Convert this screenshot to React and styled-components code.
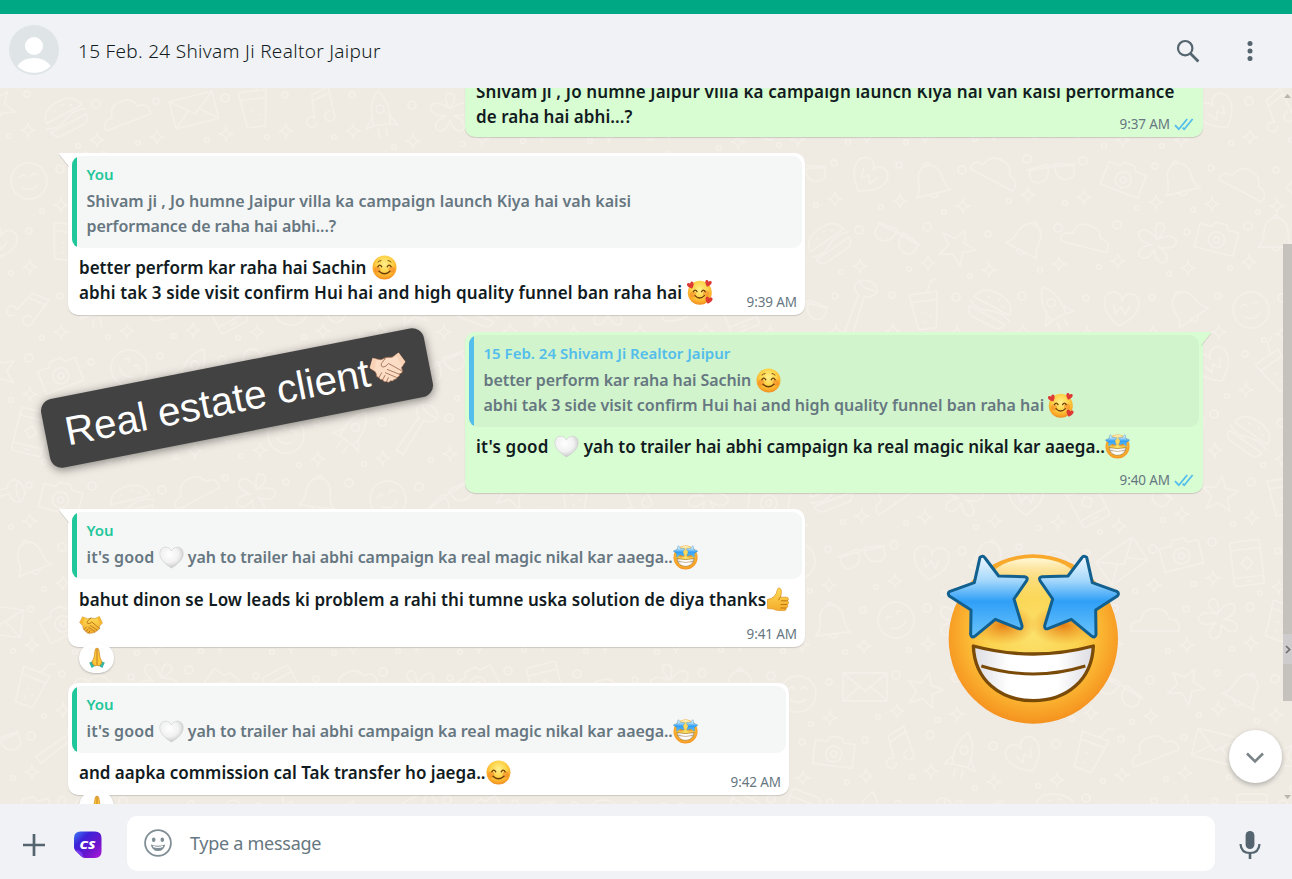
import React from 'react';
import styled, { createGlobalStyle, css } from 'styled-components';

const Global = createGlobalStyle`
  * { box-sizing: border-box; }
  body { margin: 0; font-family: 'Noto Sans', 'Open Sans', sans-serif; color: #111b21; }
`;

const Page = styled.div`
  width: 1292px;
  height: 879px;
  display: flex;
  flex-direction: column;
  overflow: hidden;
`;
const TopStrip = styled.div`
  height: 14px;
  flex: none;
  background: #00a884;
`;
const Header = styled.header`
  height: 74px;
  flex: none;
  display: flex;
  align-items: center;
  padding: 0 37px 2px 9px;
  background: #f0f2f5;
`;
const Title = styled.h1`
  flex: 1;
  margin: 2px 0 0 19px;
  font-size: 19px;
  font-weight: 350;
  line-height: 28px;
  letter-spacing: 0.31px;
  color: #111b21;
`;
const HeaderActions = styled.div`
  display: flex;
  align-items: center;
  gap: 45px;
  margin-top: 2px;
`;

const Chat = styled.main`
  position: relative;
  flex: none;
  height: 716px;
  overflow: hidden;
  background: #efeae2;
`;
const Wallpaper = styled.svg`
  position: absolute;
  inset: 0;
`;
const Messages = styled.div`
  position: relative;
  display: flex;
  flex-direction: column;
  padding: 0 89px 0 68px;
`;
const Bubble = styled.article`
  position: relative;
  flex: none;
  width: ${(p) => p.$w}px;
  margin-top: ${(p) => p.$gap}px;
  padding: 3px 3px 0 4px;
  border-radius: 10px;
  background: ${(p) => (p.$out ? '#d9fdd3' : '#fff')};
  align-self: ${(p) => (p.$out ? 'flex-end' : 'flex-start')};
  box-shadow: 0 1px 1px rgba(11, 20, 26, 0.16);
  ${(p) => p.$out && css`padding-right: 4px;`}
  ${(p) => p.$tail && (p.$out ? css`border-top-right-radius: 0;` : css`border-top-left-radius: 0;`)}
`;
const TailShape = styled.svg`
  position: absolute;
  top: 0;
  filter: drop-shadow(0 1px 0.5px rgba(11, 20, 26, 0.16));
  ${(p) => (p.$out ? 'right: -8px; transform: scaleX(-1);' : 'left: -9px;')}
`;
const Quote = styled.blockquote`
  display: flex;
  margin: 0;
  overflow: hidden;
  border-radius: 9px;
  background: ${(p) => (p.$out ? '#d1f4cc' : '#f5f6f6')};
  color: #667781;
  font-size: 16px;
  &::before {
    content: '';
    width: 5px;
    flex: none;
    background: ${(p) => (p.$out ? '#53bdeb' : '#1fc79a')};
  }
`;
const QuoteText = styled.div`
  padding: 5px 9px 9px 9.5px;
`;
const Author = styled.div`
  height: 28px;
  line-height: 26px;
  font-size: 15px;
  font-weight: 600;
  color: ${(p) => (p.$out ? '#53bdeb' : '#1fc79a')};
`;
const Line = styled.div`
  height: 25px;
  display: flex;
  align-items: center;
  line-height: 25px;
  font-weight: 600;
  white-space: pre;
`;
const Run = styled.span`
  letter-spacing: ${(p) => p.$ls || 0}px;
  margin-right: ${(p) => p.$after || 0}px;
`;
const Body = styled.div`
  display: grid;
  height: ${(p) => p.$h}px;
  padding: ${(p) => p.$top || 7}px 5px 3px 7px;
  font-size: 17px;
`;
const Text = styled.div`
  grid-area: 1 / 1;
`;
const Meta = styled.div`
  grid-area: 1 / 1;
  place-self: end;
  display: flex;
  align-items: center;
  gap: 4px;
  height: 20px;
  font-size: 13.5px;
  letter-spacing: -0.1px;
  color: #667781;
`;
const Reaction = styled.div`
  position: absolute;
  left: 11px;
  bottom: -26px;
  width: 35px;
  height: 30px;
  display: flex;
  align-items: center;
  justify-content: center;
  border-radius: 15px;
  background: #fff;
  box-shadow: 0 1px 2px rgba(11, 20, 26, 0.22);
`;
const EmojiSvg = styled.svg`
  flex: none;
  margin-right: ${(p) => p.$after || 0}px;
`;

const Label = styled.div`
  position: absolute;
  left: 42px;
  top: 275px;
  width: 390px;
  height: 70px;
  display: flex;
  align-items: center;
  padding-left: 20px;
  border-radius: 12px;
  background: #424242;
  color: #fff;
  font: 40.400px/70px 'Liberation Sans', sans-serif;
  white-space: pre;
  transform: rotate(-11.100deg);
  box-shadow: 0 2px 10px rgba(0, 0, 0, 0.45);
`;
const Sticker = styled.div`
  position: absolute;
  left: 945px;
  top: 463px;
  width: 176px;
  height: 176px;
`;
const JumpButton = styled.button`
  position: absolute;
  right: 10px;
  bottom: 21px;
  width: 53px;
  height: 53px;
  display: grid;
  place-items: center;
  padding: 0 2px 0 0;
  border: 0;
  border-radius: 50%;
  background: #fff;
  box-shadow: 0 2px 5px rgba(11, 20, 26, 0.28);
`;
const ScrollRail = styled.div`
  position: absolute;
  top: 0;
  right: 0;
  bottom: 0;
  width: 9px;
  display: flex;
  flex-direction: column;
  justify-content: space-between;
  align-items: center;
  padding: 6px 0 5px;
`;
const Thumb = styled.div`
  position: absolute;
  top: 156px;
  right: 0;
  width: 9px;
  height: 457px;
  background: #c5c2bd;
`;
const PanelTab = styled.div`
  position: absolute;
  top: 546px;
  right: 0;
  width: 9px;
  height: 30px;
  display: grid;
  place-items: center;
  background: #cfccce;
`;

const Footer = styled.footer`
  flex: 1;
  display: flex;
  align-items: center;
  padding: 4px 31px 0 23px;
  background: #f0f2f5;
`;
const ToolIcons = styled.div`
  width: 104px;
  flex: none;
  display: flex;
  align-items: center;
  gap: 28px;
  margin-top: 2px;
`;
const Composer = styled.div`
  width: 1088px;
  height: 55px;
  margin-top: -1px;
  display: flex;
  align-items: center;
  gap: 18px;
  padding-left: 17px;
  border-radius: 10px;
  background: #fff;
`;
const Placeholder = styled.span`
  font-size: 18px;
  letter-spacing: -0.28px;
  color: #667781;
`;
const MicSlot = styled.div`
  margin: 2px 0 0 24px;
  display: flex;
`;

function Defs() {
  return (
    <svg width="0" height="0" display="block">
      <defs>
        <radialGradient id="face" cx="50%" cy="36%" r="66%">
          <stop offset="0" stopColor="#fff08c" />
          <stop offset=".5" stopColor="#fdd348" />
          <stop offset=".8" stopColor="#fbab29" />
          <stop offset="1" stopColor="#ee8722" />
        </radialGradient>
        <radialGradient id="bigFace" cx="50%" cy="46%" r="54%">
          <stop offset="0" stopColor="#fbe26c" />
          <stop offset=".5" stopColor="#fbd350" />
          <stop offset=".72" stopColor="#fbb833" />
          <stop offset="1" stopColor="#f5921f" />
        </radialGradient>
        <linearGradient id="shine" x1="0" y1="0" x2="0" y2="1">
          <stop offset="0" stopColor="#fff9d8" />
          <stop offset="1" stopColor="#fbe380" stopOpacity="0" />
        </linearGradient>
        <linearGradient id="star" x1="0" y1="0" x2="0" y2="1">
          <stop offset="0" stopColor="#f2f9ff" />
          <stop offset=".3" stopColor="#a5d8fb" />
          <stop offset=".56" stopColor="#2f9ff7" />
          <stop offset="1" stopColor="#6cc4fb" />
        </linearGradient>
        <radialGradient id="eyeShade">
          <stop offset="0" stopColor="#e2740c" stopOpacity=".9" />
          <stop offset="1" stopColor="#f0901c" stopOpacity="0" />
        </radialGradient>
        <linearGradient id="teeth" x1="0" x2="1" y1="0" y2="0">
          <stop offset="0" stopColor="#dcdce2" />
          <stop offset=".3" stopColor="#fff" />
          <stop offset=".7" stopColor="#fff" />
          <stop offset="1" stopColor="#dcdce2" />
        </linearGradient>
        <radialGradient id="white" cx="42%" cy="35%" r="65%">
          <stop offset="0" stopColor="#fff" />
          <stop offset=".6" stopColor="#f1f1f1" />
          <stop offset="1" stopColor="#c9c9c9" />
        </radialGradient>
        <linearGradient id="hand" x1="0" y1="0" x2="0" y2="1">
          <stop offset="0" stopColor="#fddb55" />
          <stop offset="1" stopColor="#f5ac2c" />
        </linearGradient>
        <linearGradient id="badge" x1="0" y1="0" x2="1" y2="1">
          <stop offset="0" stopColor="#3f7df5" />
          <stop offset=".3" stopColor="#3b22d8" />
          <stop offset=".65" stopColor="#6a16cc" />
          <stop offset="1" stopColor="#b01ad8" />
        </linearGradient>
      </defs>
    </svg>
  );
}

const STAR = 'M180 82 Q189 74 195 84 L236 138 L314 140 Q325 142 320 152 L282 207 L306 287 Q307 299 296 296 L226 268 L164 319 Q155 325 152 314 L153 240 L89 199 Q80 190 90 184 L163 158Z';

function StarStruck({ size = 25, after }) {
  const big = size > 60;
  return (
    <EmojiSvg $after={after} width={size} height={size} viewBox="75 63 528 528" role="img" aria-label="🤩">
      <circle cx="340" cy="327" r="254" fill="url(#bigFace)" />
      <ellipse cx="340" cy="150" rx="130" ry="66" fill="url(#shine)" />
      <ellipse cx="250" cy="285" rx="100" ry="60" fill="url(#eyeShade)" />
      <ellipse cx="430" cy="285" rx="100" ry="60" fill="url(#eyeShade)" />
      <path d="M160 348 Q340 396 520 348 C516 450 440 512 340 512 C240 512 164 450 160 348Z" fill="url(#teeth)" stroke="#7a4a08" strokeWidth="10" strokeLinejoin="round" />
      <path d="M184 408 Q340 456 496 408" fill="none" stroke="#7a4a08" strokeWidth="9" />
      <g stroke={big ? '#12608f' : '#3f93c4'} strokeWidth="9" strokeLinejoin="round" fill="url(#star)">
        <path d={STAR} />
        <path d={STAR} transform="matrix(-1 0 0 1 680 0)" />
      </g>
    </EmojiSvg>
  );
}

function Blush({ brows }) {
  return (
    <EmojiSvg width="25" height="25" viewBox="0 0 25 25" role="img" aria-label={brows ? '☺' : '😊'}>
      <circle cx="12.5" cy="12.5" r="12" fill="url(#face)" />
      <circle cx="5.3" cy="14.6" r="3.2" fill="#f2711c" opacity=".45" />
      <circle cx="19.7" cy="14.6" r="3.2" fill="#f2711c" opacity=".45" />
      <g fill="none" stroke="#6b3c08" strokeWidth="1.3" strokeLinecap="round">
        <path d="M5.8 11.8 Q7.8 8.6 9.8 11.8 M15.2 11.8 Q17.2 8.6 19.2 11.8" />
        <path d="M7 16.2 Q12.5 21.4 18 16.2" />
        {brows && <path d="M6 7 Q7.3 5.6 9 5.6 M19 7 Q17.7 5.6 16 5.6" strokeWidth=".9" />}
      </g>
    </EmojiSvg>
  );
}

const HEART = 'M0 3 C-5 -1 -3.2 -4 -1.3 -3.3 Q-.3 -3 0 -1.9 Q.3 -3 1.3 -3.3 C3.2 -4 5 -1 0 3Z';

function Hearts() {
  return (
    <EmojiSvg width="26" height="25" viewBox="0 0 26 25" role="img" aria-label="🥰">
      <circle cx="12.8" cy="12.7" r="12" fill="url(#face)" />
      <circle cx="6" cy="14.6" r="3" fill="#f2711c" opacity=".45" />
      <circle cx="19" cy="13.6" r="3" fill="#f2711c" opacity=".45" />
      <g fill="none" stroke="#6b3c08" strokeWidth="1.3" strokeLinecap="round">
        <path d="M6.4 11.6 Q8.2 8.8 10 11.6 M14.6 11.6 Q16.4 8.8 18.2 11.6" />
        <path d="M8 15.6 Q12.6 20.4 17.4 15.6" />
      </g>
      <g fill="#dd3a35">
        <path d={HEART} transform="translate(4 5.6) rotate(-24) scale(1.05)" />
        <path d={HEART} transform="translate(21 3.8) rotate(18) scale(1)" />
        <path d={HEART} transform="translate(21.6 20.6) rotate(14) scale(1.1)" />
      </g>
    </EmojiSvg>
  );
}

function WhiteHeart({ after }) {
  return (
    <EmojiSvg $after={after} width="25" height="25" viewBox="0 0 25 25" role="img" aria-label="🤍">
      <path d="M12.5 23 C6 19 .8 14.4 .8 8.4 C.8 4.6 3.4 2.2 6.6 2.2 C9.4 2.2 11.4 3.6 12.5 6 C13.6 3.6 15.6 2.2 18.4 2.2 C21.6 2.2 24.2 4.6 24.2 8.4 C24.2 14.4 19 19 12.5 23Z" fill="url(#white)" stroke="#c4c6c6" strokeWidth=".5" />
    </EmojiSvg>
  );
}

function ThumbsUp() {
  return (
    <EmojiSvg width="24" height="25" viewBox="0 0 24 25" role="img" aria-label="👍">
      <path d="M1.5 12.4 Q5.6 12 8 9.6 Q10.8 6.6 11.2 3.2 Q11.6 .8 13.4 1 Q15.8 1.6 15.4 5.4 Q15.2 8 14.4 10.2 L20.4 10.2 Q22.6 10.4 22.4 12.2 Q22.3 13.4 21.4 13.8 Q23 14.6 22.5 16.2 Q22.2 17.3 21 17.6 Q22.2 18.6 21.6 19.9 Q21 21 19.8 21.1 Q20.6 22.2 19.8 23 Q19.2 23.6 17.4 23.6 L12.6 23.5 Q9 23 7.2 22 L1.5 21.6Z" fill="url(#hand)" stroke="#dd8f22" strokeWidth=".7" strokeLinejoin="round" />
      <path d="M15.4 13.8 H21.4 M15 17.5 H21 M14.8 21 H19.8 M14.4 10.2 Q12.8 11 12.8 12.8" fill="none" stroke="#b96d10" strokeWidth=".9" strokeLinecap="round" />
    </EmojiSvg>
  );
}

function Handshake({ size = 24, light }) {
  const line = light ? '#a06a50' : '#a86510';
  const skin = light ? '#fbdcc4' : 'url(#hand)';
  return (
    <EmojiSvg width={size} height={size} viewBox="0 0 24 24" role="img" aria-label="🤝">
      <path d="M3.6 3.8 L8.6 5.8 L12 5 L15.8 5.6 L20.4 3.6 L23.4 10 L20.4 13.2 L20.6 15.6 Q20 17 18.4 16.8 Q18.4 18.6 16.6 18.6 Q16 20 14.4 19.6 Q13.4 20.8 12 20 Q10.6 21.4 9.4 20 Q7.6 20.4 7.2 18.4 Q5.4 18.4 5.2 16.6 Q3.4 16 4 14.2 L3.6 12.6 L.7 9.6Z" fill={skin} stroke={line} strokeWidth=".4" strokeLinejoin="round" />
      <path d="M12 5 L8.4 8.2 Q7.4 10 9 10.6 Q11 10.8 12.8 9 L20.4 15.4 M11.4 12.6 L18.2 17 M9.8 14.4 L16 18.6 M5.2 16.6 L7.4 14 M7.2 18.4 L9.2 16 M9.4 20 L11 17.8" fill="none" stroke={line} strokeWidth={light ? 0.5 : 0.75} strokeLinecap="round" strokeLinejoin="round" />
      <path d="M.7 9.6 L3.6 3.8 L6 4.8 L3.2 11.6Z M23.4 10 L20.4 3.6 L18.2 4.6 L21 12.2Z" fill={light ? '#f8d3b8' : '#f7b733'} />
    </EmojiSvg>
  );
}

function Pray() {
  return (
    <EmojiSvg width="20" height="22" viewBox="0 0 20 22" role="img" aria-label="🙏">
      <path d="M2.2 15.4 L6.6 14 L8.4 18.8 L4.6 21Z M17.8 15.4 L13.4 14 L11.6 18.8 L15.4 21Z" fill="#35b5a6" />
      <path d="M9.8 1.2 Q8.2 1 8 4 L7 10.6 L5 15 Q6 19 9 19 L9.9 18Z M10.2 1.2 Q11.8 1 12 4 L13 10.6 L15 15 Q14 19 11 19 L10.1 18Z" fill="#fcc73a" stroke="#cf8416" strokeWidth=".7" strokeLinejoin="round" />
    </EmojiSvg>
  );
}

function Ticks() {
  return (
    <svg width="20" height="13" viewBox="0 0 20 13" fill="none" stroke="#53bdeb" strokeWidth="1.8">
      <path d="M1 7.2 L4.8 11.2 L13.2 1 M8.6 9.6 L10.2 11.2 L18.6 1" />
    </svg>
  );
}

function Tail({ out }) {
  return (
    <TailShape $out={out} width="10" height="14" viewBox="0 0 10 14">
      <path d="M0 1 Q0 0 1.5 0 H10 V13.5Z" fill={out ? '#d9fdd3' : '#fff'} />
    </TailShape>
  );
}

const DOODLES = [
  'M0 -18 L5 -6 L18 -5 L8 3 L12 16 L0 9 L-12 16 L-8 3 L-18 -5 L-5 -6Z',
  'M0 17 C-26 0 -18 -18 -7 -16 Q-1 -15 0 -8 Q1 -15 7 -16 C18 -18 26 0 0 17Z M-8 -4 L-5 5 L0 -2 L5 5 L8 -4',
  'M-20 -10 H-8 L-5 -15 H6 L9 -10 H20 V14 H-20Z M8 2 A8 8 0 1 1 -8 2 A8 8 0 1 1 8 2 M3 2 A3 3 0 1 1 -3 2 A3 3 0 1 1 3 2',
  'M-14 -16 L-9 20 H9 L14 -16Z M-13 -8 H13 M4 -16 L9 -27 L15 -29 M-3 3 h1 M4 8 h1 M-2 13 h1',
  'M-18 12 Q-12 8 -12 -4 Q-10 -17 0 -17 Q10 -17 12 -4 Q12 8 18 12Z M-5 12 Q0 20 5 12 M-3 -17 Q0 -23 3 -17',
  'M-12 -22 H12 Q15 -22 15 -19 V19 Q15 22 12 22 H-12 Q-15 22 -15 19 V-19 Q-15 -22 -12 -22Z M-15 -14 H15 M-15 14 H15 M-3 18 H3 M-6 0 L0 -6 L6 0 L0 6Z',
  'M-20 -2 Q-18 -16 0 -16 Q18 -16 20 -2Z M-22 3 Q-11 9 0 3 Q11 -2 22 3 M-20 8 H20 Q19 16 12 16 H-12 Q-19 16 -20 8 M-8 -9 h2 M2 -11 h2 M9 -7 h2',
  'M-8 14 A5 5 0 1 1 -9 9 L-6 -14 L12 -18 L11 9 A5 5 0 1 1 7 6 M-6 -8 L12 -12',
  'M18 0 A18 18 0 1 1 -18 0 A18 18 0 1 1 18 0 M-8 5 Q0 12 8 5 M-9 -5 Q-6 -9 -3 -5 M3 -5 Q6 -9 9 -5',
  'M-24 10 Q-26 0 -14 0 Q-12 -14 2 -12 Q12 -12 14 -2 Q26 -2 24 10Z',
  'M0 -26 Q12 -14 8 8 H-8 Q-12 -14 0 -26Z M-8 -2 L-16 10 L-8 8 M8 -2 L16 10 L8 8 M-4 12 V20 M4 12 V20 M4 -8 A4 4 0 1 1 -4 -8 A4 4 0 1 1 4 -8',
  'M-24 -6 L-4 -9 Q0 -4 4 -9 L24 -6 M-22 -5 Q-24 9 -13 8 Q-3 7 -3 -6Z M22 -5 Q24 9 13 8 Q3 7 3 -6Z',
  'M-22 -14 H22 V14 H-22Z M-22 -14 L0 4 L22 -14 M-22 14 L-6 0 M22 14 L6 0',
  'M0 -5 Q-9 -20 0 -21 Q9 -20 0 -5 Q14 -15 19 -8 Q20 2 4 2 Q18 8 13 16 Q5 20 0 6 Q-5 20 -13 16 Q-18 8 -4 2 Q-20 2 -19 -8 Q-14 -15 0 -5Z',
  'M-26 14 L4 -12 Q0 -22 10 -24 Q26 -20 22 -6 Q14 -2 8 -8 L-20 20Z M10 -24 Q10 -14 22 -6',
];
const SPARKLE = 'M0 -9 Q1 -1 9 0 Q1 1 0 9 Q-1 1 -9 0 Q-1 -1 0 -9Z';

function ChatWallpaper() {
  const marks = [];
  for (let r = 0; r < 12; r += 1) {
    for (let c = 0; c < 21; c += 1) {
      const n = (r * 37 + c * 23 + r * c * 5) % 101;
      const x = c * 64 + (r % 2) * 32 + (n % 9) - 4;
      const y = r * 64 + 24 + (n % 13) - 6;
      marks.push(<path key={`d${r}-${c}`} d={DOODLES[(r * 7 + c * 4 + (n % 3)) % DOODLES.length]} transform={`translate(${x} ${y}) rotate(${(n % 11) * 7 - 35})`} />);
      marks.push(<circle key={`a${r}-${c}`} cx={x + 31} cy={y - 12} r={3 + (n % 2)} />);
      marks.push(<circle key={`b${r}-${c}`} cx={x + 13} cy={y + 30} r="2.4" />);
      marks.push(<path key={`s${r}-${c}`} d={SPARKLE} transform={`translate(${x + 32} ${y + 24}) scale(.8)`} />);
    }
  }
  return (
    <Wallpaper width="1292" height="716" fill="none" stroke="#f4efe8" strokeWidth="1.8" strokeLinejoin="round" strokeLinecap="round" aria-hidden="true">
      {marks}
    </Wallpaper>
  );
}

export default function App() {
  return (
    <Page>
      <Global />
      <Defs />
      <TopStrip />
      <Header>
        <svg width="50" height="50" viewBox="0 0 50 50">
          <circle cx="25" cy="25" r="25" fill="#dfe5e7" />
          <circle cx="25" cy="21" r="9" fill="#fff" />
          <path d="M8.400 41.200 Q13.500 33 25 33 Q36.500 33 41.600 41.200 A24 24 0 0 1 8.400 41.200Z" fill="#fff" />
        </svg>
        <Title>15 Feb. 24 Shivam Ji Realtor Jaipur</Title>
        <HeaderActions>
          <svg width="24" height="24" viewBox="0 0 24 24" fill="none" stroke="#54656f">
            <circle cx="9.200" cy="9.200" r="7.200" strokeWidth="2.200" />
            <path d="M14.200 14.200 L22.400 22.400" strokeWidth="2.800" />
          </svg>
          <svg width="10" height="22" viewBox="0 0 10 22" fill="#54656f">
            <circle cx="5" cy="3.400" r="2.500" />
            <circle cx="5" cy="10.900" r="2.500" />
            <circle cx="5" cy="18.400" r="2.500" />
          </svg>
        </HeaderActions>
      </Header>

      <Chat>
        <ChatWallpaper />
        <ScrollRail>
          <svg width="7" height="4"><path d="M0 4 L3.500 0 L7 4Z" fill="#b9b5ae" /></svg>
          <svg width="7" height="4"><path d="M0 0 L3.500 4 L7 0Z" fill="#b9b5ae" /></svg>
        </ScrollRail>
        <Thumb />
        <PanelTab>
          <svg width="6" height="9" viewBox="0 0 6 9" fill="none" stroke="#6f6f73" strokeWidth="1.700"><path d="M1 1 L4.600 4.500 L1 8" /></svg>
        </PanelTab>
        <Messages>
          <Bubble $out $w={738} $gap={-20}>
            <Body $h={66} $top={8}>
              <Text>
                <Line><Run $ls={0.13}>Shivam ji , Jo humne Jaipur villa ka campaign launch Kiya hai vah kaisi performance</Run></Line>
                <Line><Run $ls={0.05}>de raha hai abhi...?</Run></Line>
              </Text>
              <Meta>9:37 AM <Ticks /></Meta>
            </Body>
          </Bubble>

          <Bubble $tail $w={737} $gap={16}>
            <Tail />
            <Quote>
              <QuoteText>
                <Author>You</Author>
                <Line><Run $ls={0.04}>Shivam ji , Jo humne Jaipur villa ka campaign launch Kiya hai vah kaisi</Run></Line>
                <Line><Run $ls={-0.07}>performance de raha hai abhi...?</Run></Line>
              </QuoteText>
            </Quote>
            <Body $h={67}>
              <Text>
                <Line><Run $after={6}>better perform kar raha hai Sachin</Run><Blush brows /></Line>
                <Line><Run $ls={0.1} $after={5}>abhi tak 3 side visit confirm Hui hai and high quality funnel ban raha hai</Run><Hearts /></Line>
              </Text>
              <Meta>9:39 AM</Meta>
            </Body>
          </Bubble>

          <Bubble $out $tail $w={738} $gap={17}>
            <Tail out />
            <Quote $out>
              <QuoteText>
                <Author $out>15 Feb. 24 Shivam Ji Realtor Jaipur</Author>
                <Line><Run $ls={-0.08} $after={5}>better perform kar raha hai Sachin</Run><Blush brows /></Line>
                <Line><Run $after={4}>abhi tak 3 side visit confirm Hui hai and high quality funnel ban raha hai</Run><Hearts /></Line>
              </QuoteText>
            </Quote>
            <Body $h={66}>
              <Text>
                <Line>
                  <Run $ls={0.2} $after={5}>it's good</Run>
                  <WhiteHeart after={5} />
                  <Run $ls={0.02}>yah to trailer hai abhi campaign ka real magic nikal kar aaega..</Run>
                  <StarStruck />
                </Line>
              </Text>
              <Meta>9:40 AM <Ticks /></Meta>
            </Body>
          </Bubble>

          <Bubble $tail $w={737} $gap={16}>
            <Tail />
            <Quote>
              <QuoteText>
                <Author>You</Author>
                <Line>
                  <Run $ls={0.12} $after={4.5}>it's good</Run>
                  <WhiteHeart after={4} />
                  <Run $ls={-0.07}>yah to trailer hai abhi campaign ka real magic nikal kar aaega..</Run>
                  <StarStruck />
                </Line>
              </QuoteText>
            </Quote>
            <Body $h={68} $top={8}>
              <Text>
                <Line><Run $ls={0.06}>bahut dinon se Low leads ki problem a rahi thi tumne uska solution de diya thanks</Run><ThumbsUp /></Line>
                <Line><Handshake /></Line>
              </Text>
              <Meta>9:41 AM</Meta>
            </Body>
            <Reaction><Pray /></Reaction>
          </Bubble>

          <Bubble $w={721} $gap={36}>
            <Quote>
              <QuoteText>
                <Author>You</Author>
                <Line>
                  <Run $ls={0.12} $after={4.5}>it's good</Run>
                  <WhiteHeart after={4} />
                  <Run $ls={-0.07}>yah to trailer hai abhi campaign ka real magic nikal kar aaega..</Run>
                  <StarStruck />
                </Line>
              </QuoteText>
            </Quote>
            <Body $h={42}>
              <Text>
                <Line><Run>and aapka commission cal Tak transfer ho jaega..</Run><Blush /></Line>
              </Text>
              <Meta>9:42 AM</Meta>
            </Body>
            <Reaction><Pray /></Reaction>
          </Bubble>
        </Messages>
        <Label>Real estate client<Handshake size={38} light /></Label>
        <Sticker><StarStruck size={176} /></Sticker>
        <JumpButton aria-label="Scroll down">
          <svg width="20" height="14" viewBox="0 0 20 14" fill="none" stroke="#7b8489" strokeWidth="2.600"><path d="M2 3.500 L10 11.500 L18 3.500" /></svg>
        </JumpButton>
      </Chat>

      <Footer>
        <ToolIcons>
          <svg width="22" height="22" viewBox="0 0 22 22" stroke="#54656f" strokeWidth="2.700"><path d="M11 0 V22 M0 11 H22" /></svg>
          <svg width="29" height="28" viewBox="0 0 29 28">
            <path d="M7.500 .5 H22 Q28.500 .5 28.500 7 V20.500 Q28.500 27 22 27 H12 Q10 27 8 25 L2.500 19.800 Q1 18.300 1 16 V7 Q1 .5 7.500 .5Z" fill="url(#badge)" />
            <path d="M2 19 Q9.500 18.500 10.500 26.600 Q9 26 8 25Z" fill="#7a3cf0" />
            <text x="6.500" y="18" fontFamily="'Open Sans', sans-serif" fontStyle="italic" fontWeight="800" fontSize="11" textLength="16" lengthAdjust="spacingAndGlyphs" fill="#fff">CS</text>
          </svg>
        </ToolIcons>
        <Composer>
          <svg width="28" height="28" viewBox="0 0 28 28" fill="none">
            <circle cx="14" cy="14" r="12.900" stroke="#7f8d95" strokeWidth="1.800" />
            <ellipse cx="9.700" cy="10.800" rx="1.800" ry="2.200" fill="#7f8d95" />
            <ellipse cx="18.300" cy="10.800" rx="1.800" ry="2.200" fill="#7f8d95" />
            <path d="M6.800 15.400 Q14 18.200 21.200 15.400 Q20 22 14 22 Q8 22 6.800 15.400Z" fill="#7f8d95" />
            <path d="M9 17.400 Q14 19.200 19 17.400" stroke="#fff" strokeWidth="1.300" />
          </svg>
          <Placeholder>Type a message</Placeholder>
        </Composer>
        <MicSlot>
          <svg width="22" height="30" viewBox="0 0 22 30" fill="none">
            <rect x="6.600" y="1" width="8.800" height="18" rx="4.400" fill="#54656f" />
            <path d="M1.500 14 Q2 23 11 23 Q20 23 20.500 14" stroke="#54656f" strokeWidth="2.200" />
            <path d="M11 22 V29" stroke="#54656f" strokeWidth="2.600" />
          </svg>
        </MicSlot>
      </Footer>
    </Page>
  );
}
